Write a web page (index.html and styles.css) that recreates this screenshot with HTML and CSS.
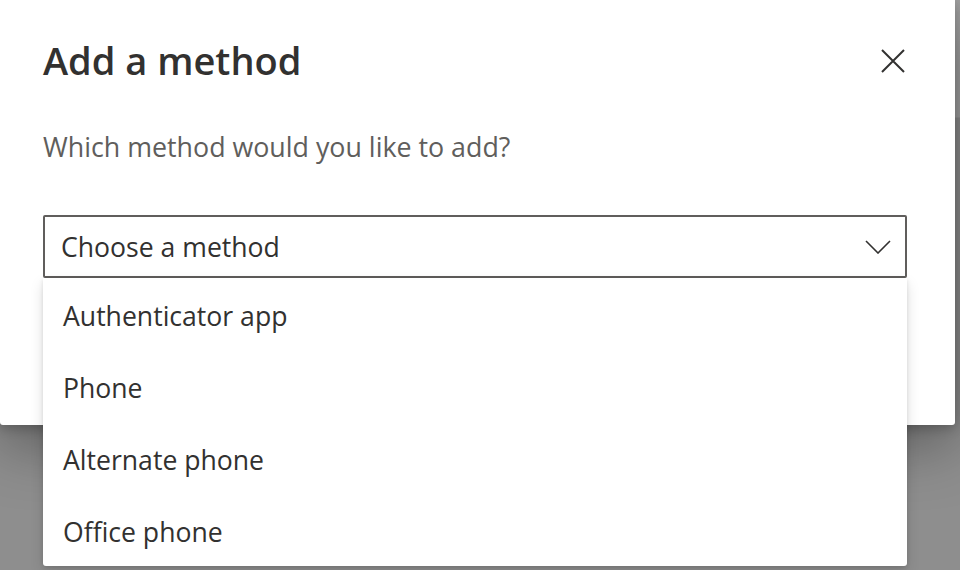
FILE: index.html
```html
<!DOCTYPE html>
<html lang="en">
<head>
<meta charset="utf-8">
<title>Add a method</title>
<link rel="stylesheet" href="styles.css">
</head>
<body>
<div class="page">
  <section class="dialog" role="dialog" aria-labelledby="dlg-title">
    <header class="dialog-head">
      <h1 class="dialog-title" id="dlg-title">Add a method</h1>
      <button class="close-btn" aria-label="Close">
        <svg width="24" height="24" viewBox="0 0 24 24" aria-hidden="true">
          <path d="M1 1 L23 23 M23 1 L1 23" stroke="#323130" stroke-width="2" fill="none" stroke-linecap="butt"/>
        </svg>
      </button>
    </header>
    <p class="dialog-sub">Which method would you like to add?</p>
    <div class="dropdown">
      <div class="select">
        <span class="select-text">Choose a method</span>
        <svg class="chevron" width="26" height="14" viewBox="0 0 26 14" aria-hidden="true">
          <path d="M1 1 L13 13 L25 1" stroke="#323130" stroke-width="1.6" fill="none"/>
        </svg>
      </div>
      <ul class="menu" role="listbox">
        <li class="option">Authenticator app</li>
        <li class="option">Phone</li>
        <li class="option">Alternate phone</li>
        <li class="option">Office phone</li>
      </ul>
    </div>
  </section>
</div>
</body>
</html>
```
FILE: styles.css
```css
* { box-sizing: border-box; }
html, body {
  margin: 0;
  padding: 0;
  width: 960px;
  height: 570px;
  overflow: hidden;
}
body {
  background: linear-gradient(to bottom, #a2a2a2 0, #a2a2a2 117px, #8e8e8e 118px, #8e8e8e 100%);
  font-family: "Open Sans", "Noto Sans", sans-serif;
  color: #323130;
}
.page {
  width: 960px;
  height: 570px;
}
.dialog {
  width: 955px;
  height: 425px;
  background: #fff;
  border-radius: 0 0 3px 3px;
  box-shadow: 0 20px 60px rgba(0,0,0,0.35), 0 4px 12px rgba(0,0,0,0.2);
  padding: 34px 0 0 43px;
  position: relative;
}
.dialog-head {
  display: flex;
  align-items: center;
  justify-content: space-between;
  padding-right: 50px;
}
.dialog-title {
  margin: 0;
  font-size: 38px;
  line-height: 52px;
  font-weight: 600;
  color: #323130;
}
.close-btn {
  border: 0;
  background: none;
  padding: 0;
  width: 24px;
  height: 24px;
  display: flex;
  margin-top: 2px;
}
.dialog-sub {
  margin: 43px 0 0 0;
  font-size: 26.8px;
  line-height: 36px;
  color: #605e5c;
}
.dropdown {
  margin-top: 50px;
  width: 864px;
  position: relative;
}
.select {
  height: 63px;
  border: 2px solid #605e5c;
  border-radius: 2px;
  display: flex;
  align-items: center;
  justify-content: space-between;
  padding: 1px 14px 0 16px;
}
.select-text {
  font-size: 26.6px;
  line-height: 36px;
  color: #323130;
}
.chevron { display: block; }
.menu {
  position: absolute;
  top: 63px;
  left: 0;
  width: 864px;
  margin: 0;
  padding: 0;
  list-style: none;
  background: #fff;
  border-radius: 0 0 3px 3px;
  box-shadow: 0 6px 14px rgba(0,0,0,0.13), 0 1px 4px rgba(0,0,0,0.11);
  z-index: 2;
}
.option {
  height: 72px;
  display: flex;
  align-items: center;
  padding: 4px 0 0 20px;
  font-size: 26.6px;
  line-height: 36px;
  color: #323130;
}
```
